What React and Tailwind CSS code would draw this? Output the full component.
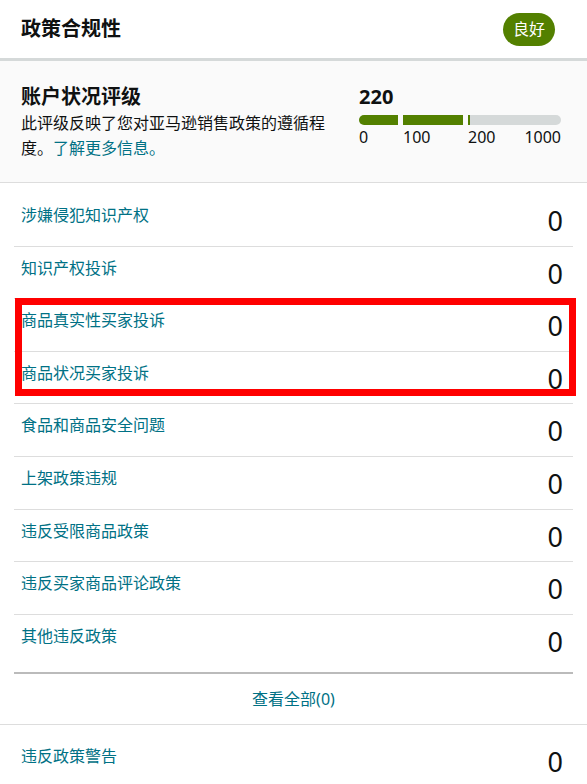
const ROWS = [
  '涉嫌侵犯知识产权',
  '知识产权投诉',
  '商品真实性买家投诉',
  '商品状况买家投诉',
  '食品和商品安全问题',
  '上架政策违规',
  '违反受限商品政策',
  '违反买家商品评论政策',
];

function Row({ label, value = 0, className = 'h-[52.6px] border-b border-[#dddddd]' }) {
  return (
    <div className={`flex items-start justify-between pl-[7px] pr-[10px] ${className}`}>
      <span className="pt-[10px] text-[16px] leading-[22px] text-[#007185]">{label}</span>
      <span className="mt-[12px] text-[27px] leading-[30px] text-[#0f1111]">{value}</span>
    </div>
  );
}

export default function App() {
  return (
    <div className="w-full min-h-screen bg-white font-['Noto_Sans','Noto_Sans_CJK_SC',sans-serif] text-[#0f1111]">
      {/* Header */}
      <div className="h-[58px] flex items-center justify-between pl-[21px] pr-[32px]">
        <h1 className="text-[20px] leading-[28px] font-bold">政策合规性</h1>
        <span className="h-[33px] px-[10px] flex items-center rounded-full bg-[#538000] text-white text-[16px]">良好</span>
      </div>
      <div className="h-[3px] bg-[#d5d9d9]" />

      {/* Account health */}
      <div className="bg-[#fafafa] border-b border-[#dddddd] flex justify-between pl-[21px] pr-[26px] pt-[22px] pb-[21px]">
        <div className="w-[312px]">
          <h2 className="text-[20px] leading-[28px] font-bold">账户状况评级</h2>
          <p className="text-[16px] leading-[25px]">
            此评级反映了您对亚马逊销售政策的遵循程度。<a className="text-[#007185]">了解更多信息。</a>
          </p>
        </div>
        <div className="w-[202px]">
          <div className="text-[20px] leading-[28px] font-bold">220</div>
          <div className="mt-[4px] flex gap-[5px] h-[10px]">
            <div className="w-[39px] rounded-l-full bg-[#538000]" />
            <div className="w-[60px] bg-[#538000]" />
            <div className="flex-1 rounded-r-full bg-[#d5d9d9] overflow-hidden">
              <div className="w-[2px] h-full bg-[#538000]" />
            </div>
          </div>
          <div className="mt-[2px] grid grid-cols-[44px_65px_1fr_auto] text-[16px] leading-[20px]">
            <span>0</span>
            <span>100</span>
            <span>200</span>
            <span>1000</span>
          </div>
        </div>
      </div>

      {/* Violations */}
      <div className="mx-[14px] pt-[11px]">
        <Row label={ROWS[0]} />
        <Row label={ROWS[1]} />
        <div className="relative">
          <Row label={ROWS[2]} />
          <Row label={ROWS[3]} />
          <div className="absolute top-[-1px] left-[1px] right-[-3px] h-[98px] border-[7px] border-[#ff0000] pointer-events-none" />
        </div>
        {ROWS.slice(4).map(r => <Row key={r} label={r} />)}
        <Row label="其他违反政策" className="h-[59px] border-b-2 border-[#bbbbbb]" />
        <div className="h-[50px] flex items-center justify-center text-[16px] text-[#007185]">查看全部(0)</div>
      </div>

      <div className="border-t border-[#dddddd] pt-[10px]">
        <div className="mx-[14px]">
          <Row label="违反政策警告" className="h-[52.6px]" />
        </div>
      </div>
    </div>
  );
}
